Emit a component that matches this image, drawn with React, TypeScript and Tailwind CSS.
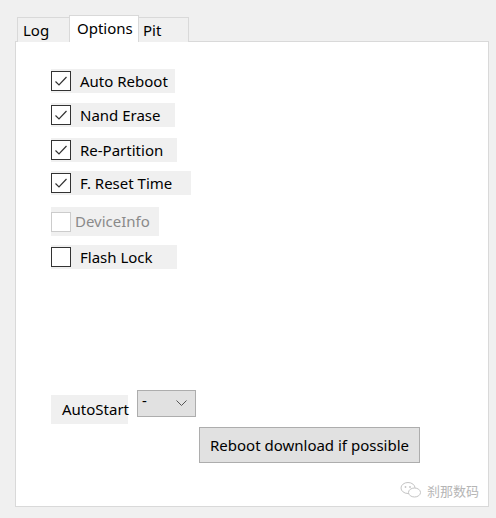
const font = { fontFamily: '"Noto Sans", "Liberation Sans", sans-serif' };

type Row = { label: string; checked: boolean; disabled?: boolean; mt: string; w: string; h: string };

const rows: Row[] = [
  { label: "Auto Reboot", checked: true, mt: "mt-[27px]", w: "w-[124px]", h: "h-[24px]" },
  { label: "Nand Erase", checked: true, mt: "mt-[10px]", w: "w-[124px]", h: "h-[24px]" },
  { label: "Re-Partition", checked: true, mt: "mt-[11px]", w: "w-[126px]", h: "h-[24px]" },
  { label: "F. Reset Time", checked: true, mt: "mt-[9px]", w: "w-[140px]", h: "h-[24px]" },
  { label: "DeviceInfo", checked: false, disabled: true, mt: "mt-[12px]", w: "w-[108px]", h: "h-[29px]" },
  { label: "Flash Lock", checked: false, mt: "mt-[9px]", w: "w-[126px]", h: "h-[24px]" },
];

function Box({ checked, disabled }: { checked: boolean; disabled?: boolean }) {
  return (
    <div
      className={`w-[20px] h-[20px] shrink-0 border bg-white flex items-center justify-center ${
        disabled ? "border-[#cccccc]" : "border-[#333333]"
      }`}
    >
      {checked && (
        <svg width="14" height="12" viewBox="0 0 14 12">
          <path d="M1.5 6.5 L5 10 L12.5 2" fill="none" stroke="#333" strokeWidth="1.2" />
        </svg>
      )}
    </div>
  );
}

export default function App() {
  return (
    <div className="w-[496px] h-[518px] bg-[#f0f0f0] pt-[15px] text-[15px] text-black" style={font}>
      <div className="flex items-end ml-[17px] h-[27px] relative z-10 -mb-px">
        <div className="w-[53px] h-[25px] border border-b-0 border-[#d9d9d9] bg-[#f0f0f0] pl-[5px] leading-[24px]">Log</div>
        <div className="w-[70px] h-[27px] border border-b-0 border-[#d9d9d9] bg-white pl-[7px] leading-[24px] -ml-px">Options</div>
        <div className="w-[51px] h-[25px] border border-b-0 border-[#d9d9d9] bg-[#f0f0f0] pl-[4px] leading-[24px] -ml-px">Pit</div>
      </div>
      <div className="relative ml-[15px] w-[474px] h-[466px] bg-white border border-[#d9d9d9] flex flex-col pl-[35px]">
        {rows.map((r) => (
          <div key={r.label} className={`${r.mt} ${r.w} ${r.h} bg-[#f0f0f0] flex items-center`}>
            <Box checked={r.checked} disabled={r.disabled} />
            <span className={`leading-none ${r.disabled ? "ml-[4px] text-[#8a8a8a]" : "ml-[9px]"}`}>{r.label}</span>
          </div>
        ))}
        <div className="mt-[121px] flex items-start">
          <div className="mt-[5px] w-[77px] h-[29px] bg-[#f0f0f0] pl-[11px] flex items-center">AutoStart</div>
          <div className="ml-[9px] w-[59px] h-[27px] bg-[#e1e1e1] border border-[#adadad] flex items-center justify-between pl-[4px] pr-[8px]">
            <span className="leading-none -mt-[6px]">-</span>
            <svg width="11" height="7" viewBox="0 0 11 7">
              <path d="M0.5 0.5 L5.5 5.5 L10.5 0.5" fill="none" stroke="#555" strokeWidth="1" />
            </svg>
          </div>
        </div>
        <div className="mt-[3px] ml-[148px] w-[221px] h-[36px] bg-[#e1e1e1] border border-[#adadad] flex items-center justify-center">
          Reboot download if possible
        </div>
        <div className="absolute right-[9px] bottom-[6px] flex items-center gap-[5px] text-[#b5b5b5] text-[13px]">
          <svg width="22" height="18" viewBox="0 0 22 18">
            <ellipse cx="8" cy="7" rx="7" ry="5.5" fill="none" stroke="#c4c4c4" strokeWidth="1" />
            <ellipse cx="14.5" cy="11.5" rx="6" ry="4.5" fill="white" stroke="#c4c4c4" strokeWidth="1" />
            <circle cx="5.5" cy="6" r="0.9" fill="#c4c4c4" />
            <circle cx="10" cy="6" r="0.9" fill="#c4c4c4" />
          </svg>
          <span style={{ fontFamily: '"Noto Sans CJK SC", sans-serif' }}>刹那数码</span>
        </div>
      </div>
    </div>
  );
}
